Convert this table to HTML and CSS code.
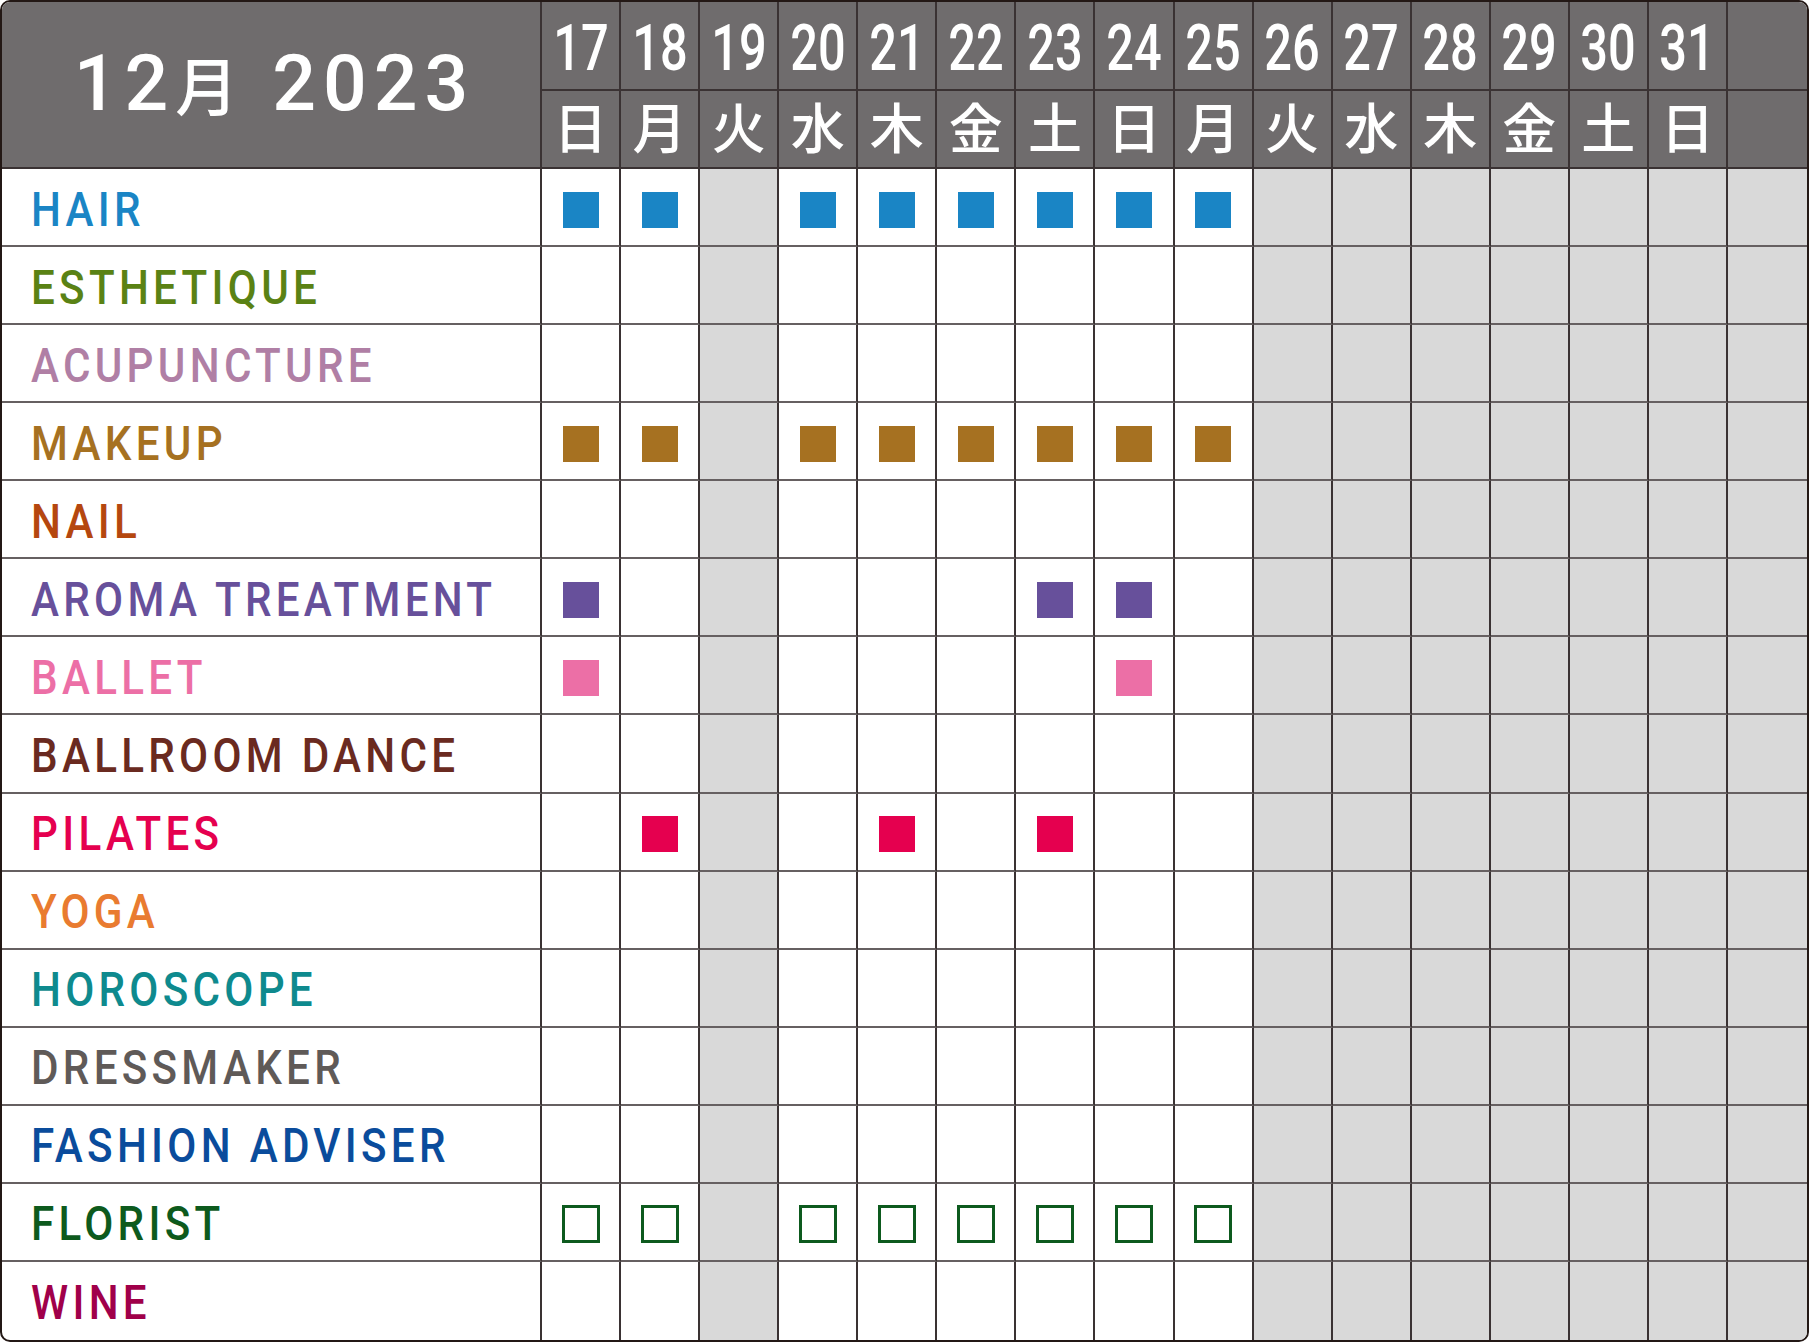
FILE: index.html
```html
<!DOCTYPE html>
<html lang="ja">
<head>
<meta charset="utf-8">
<title>12月 2023</title>
<link rel="stylesheet" href="styles.css">
</head>
<body>
<div class="cal">
  <div class="h title"><span class="yr">12<span class="mo">月</span> 2023</span></div>

  <div class="h d"><span class="num">17</span></div>
  <div class="h d"><span class="num">18</span></div>
  <div class="h d"><span class="num">19</span></div>
  <div class="h d"><span class="num">20</span></div>
  <div class="h d"><span class="num">21</span></div>
  <div class="h d"><span class="num">22</span></div>
  <div class="h d"><span class="num">23</span></div>
  <div class="h d"><span class="num">24</span></div>
  <div class="h d"><span class="num">25</span></div>
  <div class="h d"><span class="num">26</span></div>
  <div class="h d"><span class="num">27</span></div>
  <div class="h d"><span class="num">28</span></div>
  <div class="h d"><span class="num">29</span></div>
  <div class="h d"><span class="num">30</span></div>
  <div class="h d"><span class="num">31</span></div>
  <div class="h d e"></div>

  <div class="h w"><span>日</span></div>
  <div class="h w"><span>月</span></div>
  <div class="h w"><span>火</span></div>
  <div class="h w"><span>水</span></div>
  <div class="h w"><span>木</span></div>
  <div class="h w"><span>金</span></div>
  <div class="h w"><span>土</span></div>
  <div class="h w"><span>日</span></div>
  <div class="h w"><span>月</span></div>
  <div class="h w"><span>火</span></div>
  <div class="h w"><span>水</span></div>
  <div class="h w"><span>木</span></div>
  <div class="h w"><span>金</span></div>
  <div class="h w"><span>土</span></div>
  <div class="h w"><span>日</span></div>
  <div class="h w e"></div>

  <!-- HAIR -->
  <div class="lab"><span class="t hair">HAIR</span></div>
  <div class="c"><i class="m hair-bg"></i></div>
  <div class="c"><i class="m hair-bg"></i></div>
  <div class="c off"></div>
  <div class="c"><i class="m hair-bg"></i></div>
  <div class="c"><i class="m hair-bg"></i></div>
  <div class="c"><i class="m hair-bg"></i></div>
  <div class="c"><i class="m hair-bg"></i></div>
  <div class="c"><i class="m hair-bg"></i></div>
  <div class="c"><i class="m hair-bg"></i></div>
  <div class="c off"></div><div class="c off"></div><div class="c off"></div><div class="c off"></div><div class="c off"></div><div class="c off"></div><div class="c off e"></div>

  <!-- ESTHETIQUE -->
  <div class="lab"><span class="t esth">ESTHETIQUE</span></div>
  <div class="c"></div><div class="c"></div><div class="c off"></div><div class="c"></div><div class="c"></div><div class="c"></div><div class="c"></div><div class="c"></div><div class="c"></div>
  <div class="c off"></div><div class="c off"></div><div class="c off"></div><div class="c off"></div><div class="c off"></div><div class="c off"></div><div class="c off e"></div>

  <!-- ACUPUNCTURE -->
  <div class="lab"><span class="t acu">ACUPUNCTURE</span></div>
  <div class="c"></div><div class="c"></div><div class="c off"></div><div class="c"></div><div class="c"></div><div class="c"></div><div class="c"></div><div class="c"></div><div class="c"></div>
  <div class="c off"></div><div class="c off"></div><div class="c off"></div><div class="c off"></div><div class="c off"></div><div class="c off"></div><div class="c off e"></div>

  <!-- MAKEUP -->
  <div class="lab"><span class="t make">MAKEUP</span></div>
  <div class="c"><i class="m make-bg"></i></div>
  <div class="c"><i class="m make-bg"></i></div>
  <div class="c off"></div>
  <div class="c"><i class="m make-bg"></i></div>
  <div class="c"><i class="m make-bg"></i></div>
  <div class="c"><i class="m make-bg"></i></div>
  <div class="c"><i class="m make-bg"></i></div>
  <div class="c"><i class="m make-bg"></i></div>
  <div class="c"><i class="m make-bg"></i></div>
  <div class="c off"></div><div class="c off"></div><div class="c off"></div><div class="c off"></div><div class="c off"></div><div class="c off"></div><div class="c off e"></div>

  <!-- NAIL -->
  <div class="lab"><span class="t nail">NAIL</span></div>
  <div class="c"></div><div class="c"></div><div class="c off"></div><div class="c"></div><div class="c"></div><div class="c"></div><div class="c"></div><div class="c"></div><div class="c"></div>
  <div class="c off"></div><div class="c off"></div><div class="c off"></div><div class="c off"></div><div class="c off"></div><div class="c off"></div><div class="c off e"></div>

  <!-- AROMA TREATMENT -->
  <div class="lab"><span class="t aroma">AROMA TREATMENT</span></div>
  <div class="c"><i class="m aroma-bg"></i></div>
  <div class="c"></div><div class="c off"></div><div class="c"></div><div class="c"></div><div class="c"></div>
  <div class="c"><i class="m aroma-bg"></i></div>
  <div class="c"><i class="m aroma-bg"></i></div>
  <div class="c"></div>
  <div class="c off"></div><div class="c off"></div><div class="c off"></div><div class="c off"></div><div class="c off"></div><div class="c off"></div><div class="c off e"></div>

  <!-- BALLET -->
  <div class="lab"><span class="t ballet">BALLET</span></div>
  <div class="c"><i class="m ballet-bg"></i></div>
  <div class="c"></div><div class="c off"></div><div class="c"></div><div class="c"></div><div class="c"></div><div class="c"></div>
  <div class="c"><i class="m ballet-bg"></i></div>
  <div class="c"></div>
  <div class="c off"></div><div class="c off"></div><div class="c off"></div><div class="c off"></div><div class="c off"></div><div class="c off"></div><div class="c off e"></div>

  <!-- BALLROOM DANCE -->
  <div class="lab"><span class="t ballroom">BALLROOM DANCE</span></div>
  <div class="c"></div><div class="c"></div><div class="c off"></div><div class="c"></div><div class="c"></div><div class="c"></div><div class="c"></div><div class="c"></div><div class="c"></div>
  <div class="c off"></div><div class="c off"></div><div class="c off"></div><div class="c off"></div><div class="c off"></div><div class="c off"></div><div class="c off e"></div>

  <!-- PILATES -->
  <div class="lab"><span class="t pilates">PILATES</span></div>
  <div class="c"></div>
  <div class="c"><i class="m pilates-bg"></i></div>
  <div class="c off"></div><div class="c"></div>
  <div class="c"><i class="m pilates-bg"></i></div>
  <div class="c"></div>
  <div class="c"><i class="m pilates-bg"></i></div>
  <div class="c"></div><div class="c"></div>
  <div class="c off"></div><div class="c off"></div><div class="c off"></div><div class="c off"></div><div class="c off"></div><div class="c off"></div><div class="c off e"></div>

  <!-- YOGA -->
  <div class="lab"><span class="t yoga">YOGA</span></div>
  <div class="c"></div><div class="c"></div><div class="c off"></div><div class="c"></div><div class="c"></div><div class="c"></div><div class="c"></div><div class="c"></div><div class="c"></div>
  <div class="c off"></div><div class="c off"></div><div class="c off"></div><div class="c off"></div><div class="c off"></div><div class="c off"></div><div class="c off e"></div>

  <!-- HOROSCOPE -->
  <div class="lab"><span class="t horo">HOROSCOPE</span></div>
  <div class="c"></div><div class="c"></div><div class="c off"></div><div class="c"></div><div class="c"></div><div class="c"></div><div class="c"></div><div class="c"></div><div class="c"></div>
  <div class="c off"></div><div class="c off"></div><div class="c off"></div><div class="c off"></div><div class="c off"></div><div class="c off"></div><div class="c off e"></div>

  <!-- DRESSMAKER -->
  <div class="lab"><span class="t dress">DRESSMAKER</span></div>
  <div class="c"></div><div class="c"></div><div class="c off"></div><div class="c"></div><div class="c"></div><div class="c"></div><div class="c"></div><div class="c"></div><div class="c"></div>
  <div class="c off"></div><div class="c off"></div><div class="c off"></div><div class="c off"></div><div class="c off"></div><div class="c off"></div><div class="c off e"></div>

  <!-- FASHION ADVISER -->
  <div class="lab"><span class="t fashion">FASHION ADVISER</span></div>
  <div class="c"></div><div class="c"></div><div class="c off"></div><div class="c"></div><div class="c"></div><div class="c"></div><div class="c"></div><div class="c"></div><div class="c"></div>
  <div class="c off"></div><div class="c off"></div><div class="c off"></div><div class="c off"></div><div class="c off"></div><div class="c off"></div><div class="c off e"></div>

  <!-- FLORIST -->
  <div class="lab"><span class="t florist">FLORIST</span></div>
  <div class="c"><i class="m box"></i></div>
  <div class="c"><i class="m box"></i></div>
  <div class="c off"></div>
  <div class="c"><i class="m box"></i></div>
  <div class="c"><i class="m box"></i></div>
  <div class="c"><i class="m box"></i></div>
  <div class="c"><i class="m box"></i></div>
  <div class="c"><i class="m box"></i></div>
  <div class="c"><i class="m box"></i></div>
  <div class="c off"></div><div class="c off"></div><div class="c off"></div><div class="c off"></div><div class="c off"></div><div class="c off"></div><div class="c off e"></div>

  <!-- WINE -->
  <div class="lab b"><span class="t wine">WINE</span></div>
  <div class="c b"></div><div class="c b"></div><div class="c off b"></div><div class="c b"></div><div class="c b"></div><div class="c b"></div><div class="c b"></div><div class="c b"></div><div class="c b"></div>
  <div class="c off b"></div><div class="c off b"></div><div class="c off b"></div><div class="c off b"></div><div class="c off b"></div><div class="c off b"></div><div class="c off e b"></div>
</div>
</body>
</html>
```

FILE: styles.css
```css
html, body {
  margin: 0;
  padding: 0;
  background: #ffffff;
}

.cal {
  box-sizing: border-box;
  width: 1809px;
  height: 1342px;
  border: 2px solid #231815;
  border-radius: 10px;
  overflow: hidden;
  display: grid;
  grid-template-columns: 540px repeat(16, 1fr);
  grid-template-rows: 89px 78px repeat(15, 1fr);
  background: #ffffff;
  font-family: Roboto, "Noto Sans CJK JP", sans-serif;
}

.cal > div {
  box-sizing: border-box;
  border-right: 2px solid #3a3233;
  border-bottom: 2px solid #666061;
  display: flex;
  align-items: center;
  justify-content: center;
  min-width: 0;
}

.cal > .e { border-right: 0; }
.cal > .b { border-bottom: 0; }

.h {
  background: #6f6c6d;
  color: #ffffff;
}
.cal > .h { border-bottom-color: #3a3233; }

.title {
  grid-row: span 2;
}

.yr {
  font-family: Roboto, sans-serif;
  font-weight: 500;
  font-size: 77px;
  letter-spacing: 7px;
  line-height: 1;
  padding-left: 7px;
  white-space: pre;
}
.mo {
  font-family: "Noto Sans CJK JP", sans-serif;
  font-size: 63px;
  letter-spacing: 8px;
}

.d {
  padding-top: 6px;
}
.num {
  display: inline-block;
  font-weight: 500;
  font-size: 65px;
  line-height: 1;
  transform: scaleX(0.75);
}

.w {
  font-family: "Noto Sans CJK JP", sans-serif;
  font-weight: 500;
  font-size: 54px;
}
.w span {
  display: block;
  line-height: 60px;
  margin-top: -6px;
}

.lab {
  justify-content: flex-start !important;
  padding-left: 29px;
  padding-top: 4px;
}

.t {
  display: inline-block;
  font-family: Roboto, sans-serif;
  font-weight: 500;
  font-size: 49px;
  letter-spacing: 5px;
  line-height: 1;
  white-space: nowrap;
  transform: scaleX(0.86);
  transform-origin: left center;
}

.c { background: #ffffff; }
.c.off { background: #d9d9d9; }

.m {
  display: block;
  width: 36px;
  height: 36px;
  margin-top: 5px;
  box-sizing: border-box;
}
.box {
  width: 38px;
  height: 38px;
  border: 3px solid #0d5a1e;
}

.hair { color: #1a85c5; }
.hair-bg { background: #1a85c5; }
.esth { color: #5a8214; }
.acu { color: #b07fa5; }
.make { color: #a67121; }
.make-bg { background: #a67121; }
.nail { color: #b5470f; }
.aroma { color: #67509b; }
.aroma-bg { background: #67509b; }
.ballet { color: #ec6fa6; }
.ballet-bg { background: #ec6fa6; }
.ballroom { color: #6a2a20; }
.pilates { color: #e5004f; }
.pilates-bg { background: #e5004f; }
.yoga { color: #e97b30; }
.horo { color: #0e8a8e; }
.dress { color: #5f5a58; }
.fashion { color: #0a4c9c; }
.florist { color: #0d5a1d; }
.wine { color: #a0004a; }
```
